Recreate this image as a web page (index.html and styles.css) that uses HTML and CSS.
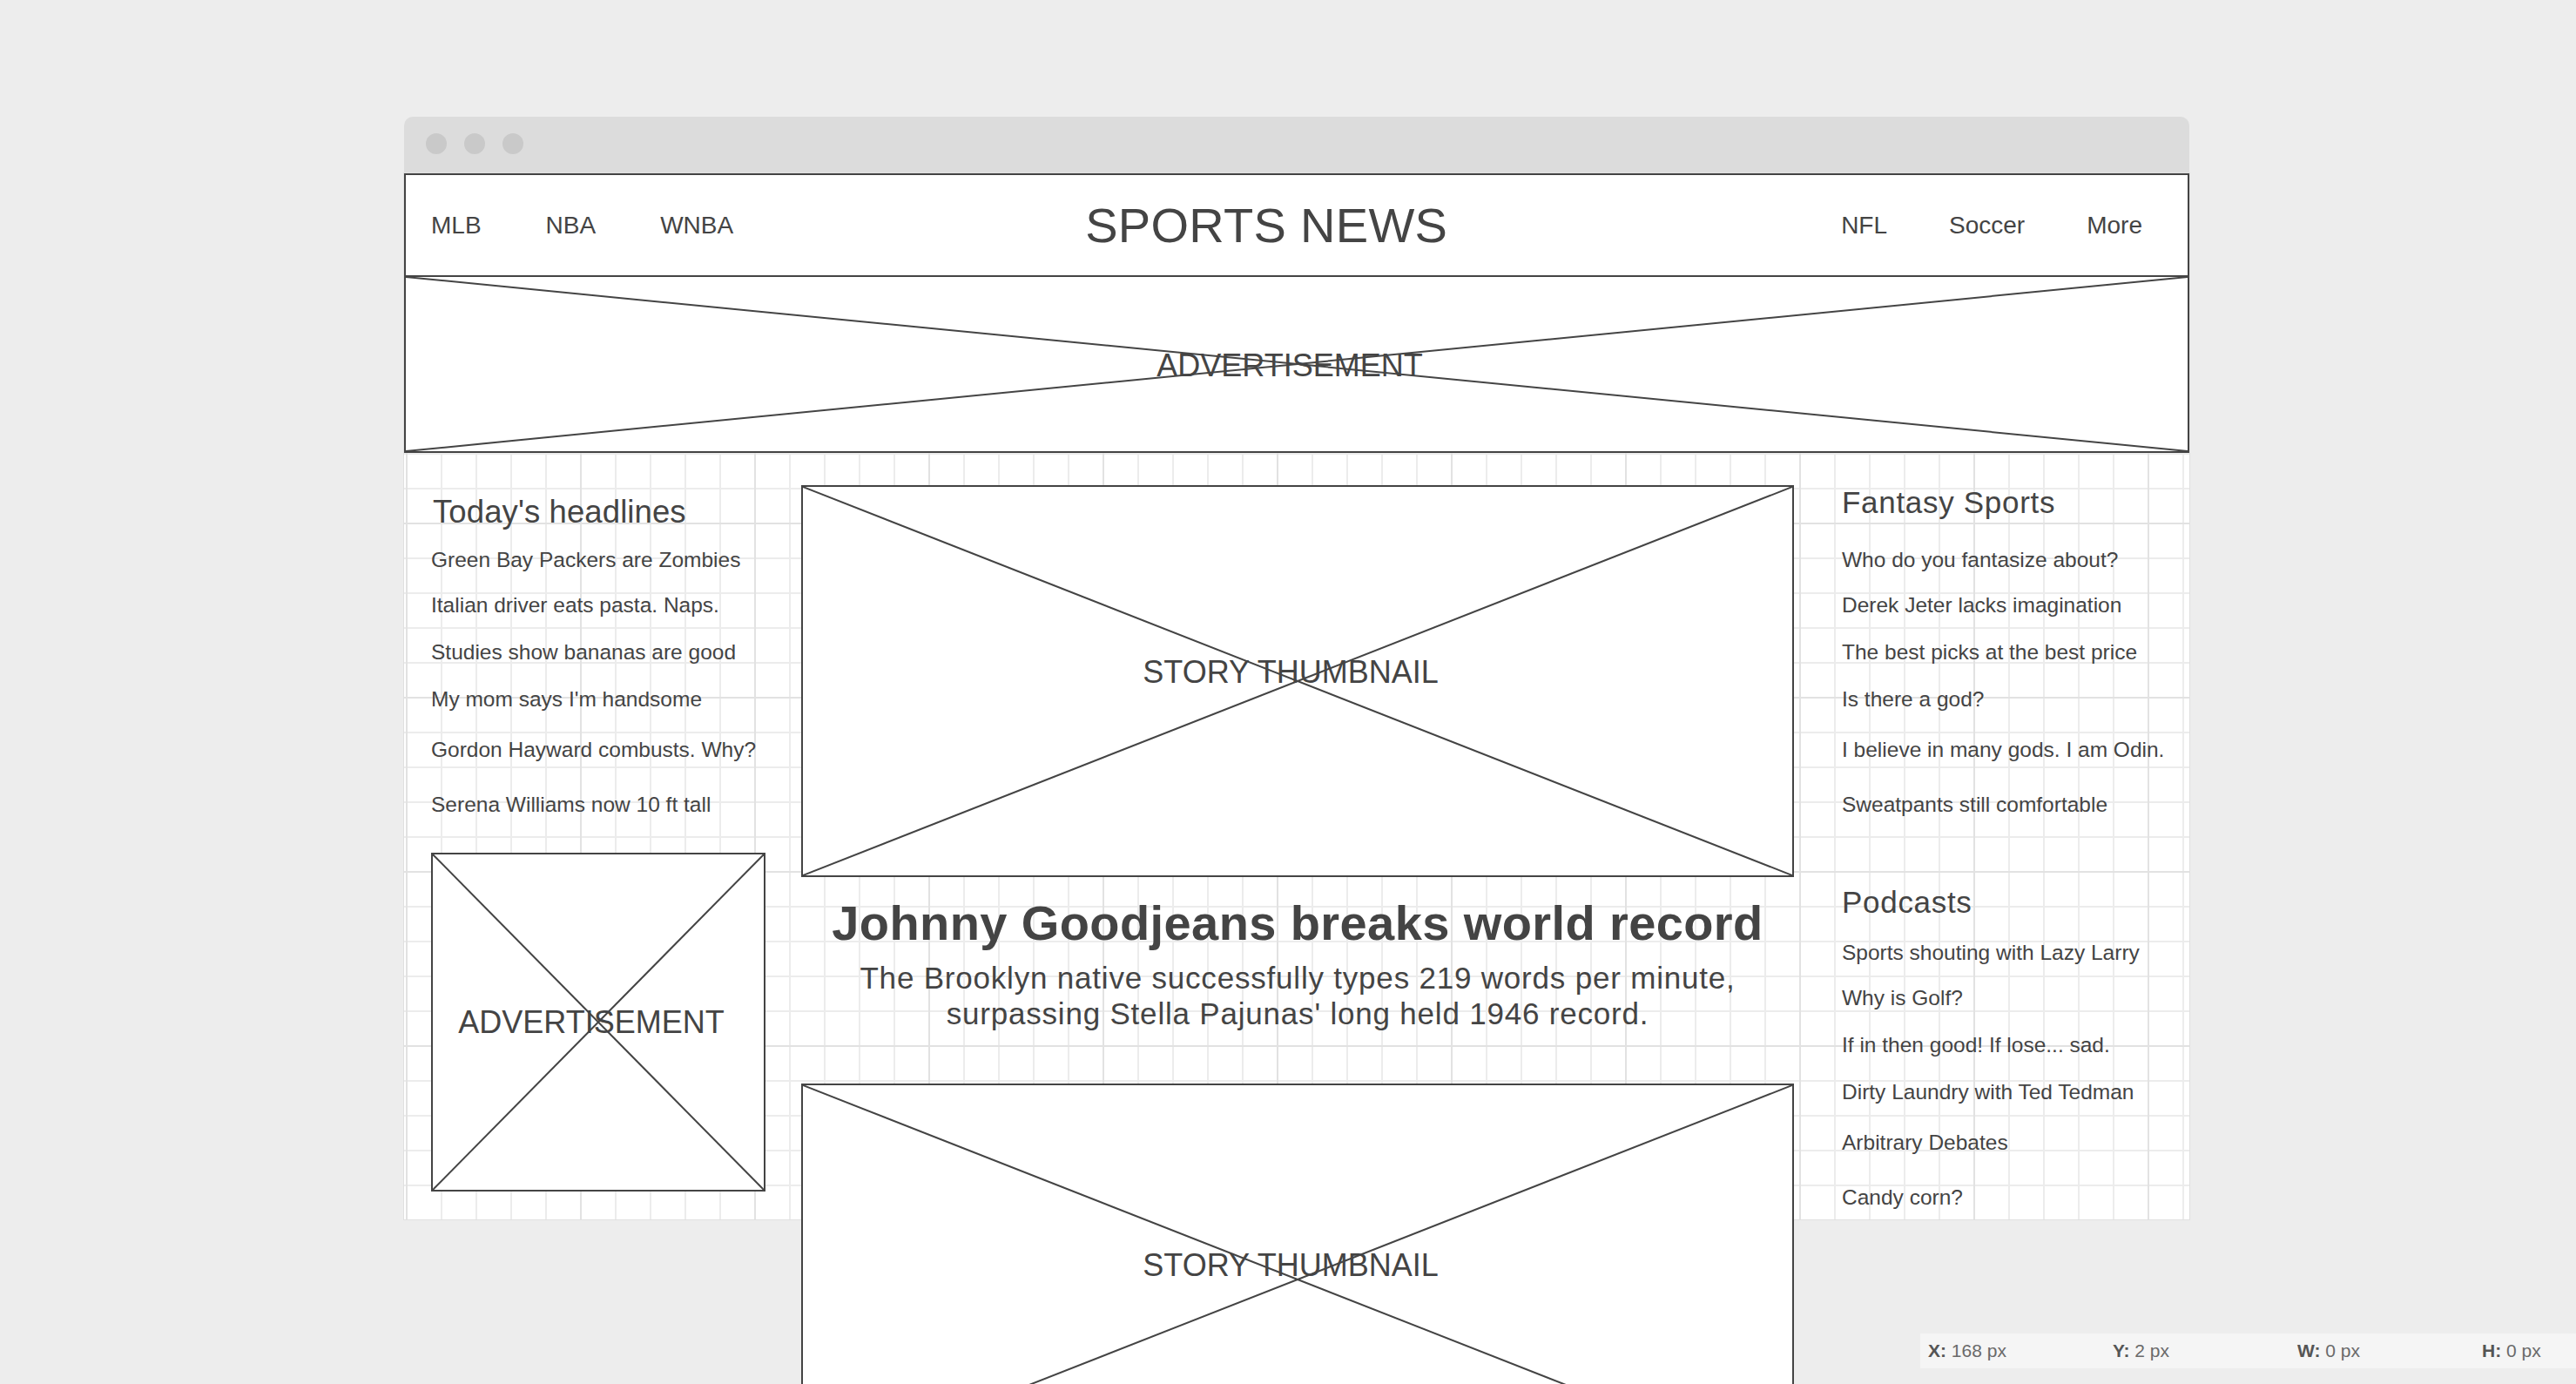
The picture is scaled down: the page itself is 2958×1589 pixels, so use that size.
FILE: index.html
```html
<!DOCTYPE html>
<html lang="en">
<head>
    <meta charset="UTF-8">
    <meta name="viewport" content="width=device-width, initial-scale=1.0">
    <title>Sports News</title>
    <link rel="stylesheet" href="styles.css">
</head>
<body>

    <div class="window">
        <div class="titlebar">
            <span class="dot"></span>
            <span class="dot"></span>
            <span class="dot"></span>
        </div>

        <div class="canvas">
            <header class="topbar">
                <nav class="nav">
                    <a href="#">MLB</a>
                    <a href="#">NBA</a>
                    <a href="#">WNBA</a>
                </nav>
                <div class="brand">SPORTS NEWS</div>
                <nav class="nav nav-right">
                    <a href="#">NFL</a>
                    <a href="#">Soccer</a>
                    <a href="#">More</a>
                </nav>
            </header>

            <div class="box banner">
                <svg class="cross" viewBox="0 0 100 100" preserveAspectRatio="none">
                    <line x1="0" y1="0" x2="100" y2="100"/>
                    <line x1="100" y1="0" x2="0" y2="100"/>
                </svg>
                <span class="box-label">ADVERTISEMENT</span>
            </div>

            <div class="columns">
                <aside class="side side-left">
                    <h2>Today's headlines</h2>
                    <ul class="links">
                        <li>Green Bay Packers are Zombies</li>
                        <li>Italian driver eats pasta. Naps.</li>
                        <li>Studies show bananas are good</li>
                        <li>My mom says I'm handsome</li>
                        <li>Gordon Hayward combusts. Why?</li>
                        <li>Serena Williams now 10 ft tall</li>
                    </ul>

                    <div class="box ad-box">
                        <svg class="cross" viewBox="0 0 100 100" preserveAspectRatio="none">
                            <line x1="0" y1="0" x2="100" y2="100"/>
                            <line x1="100" y1="0" x2="0" y2="100"/>
                        </svg>
                        <span class="box-label">ADVERTISEMENT</span>
                    </div>
                </aside>

                <section class="stories">
                    <div class="box thumb">
                        <svg class="cross" viewBox="0 0 100 100" preserveAspectRatio="none">
                            <line x1="0" y1="0" x2="100" y2="100"/>
                            <line x1="100" y1="0" x2="0" y2="100"/>
                        </svg>
                        <span class="box-label">STORY THUMBNAIL</span>
                    </div>

                    <h1 class="story-title">Johnny Goodjeans breaks world record</h1>
                    <p class="story-sub">The Brooklyn native successfully types 219 words per minute,<br>surpassing Stella Pajunas' long held 1946 record.</p>

                    <div class="box thumb thumb-next">
                        <svg class="cross" viewBox="0 0 100 100" preserveAspectRatio="none">
                            <line x1="0" y1="0" x2="100" y2="100"/>
                            <line x1="100" y1="0" x2="0" y2="100"/>
                        </svg>
                        <span class="box-label">STORY THUMBNAIL</span>
                    </div>
                </section>

                <aside class="side side-right">
                    <h2>Fantasy Sports</h2>
                    <ul class="links">
                        <li>Who do you fantasize about?</li>
                        <li>Derek Jeter lacks imagination</li>
                        <li>The best picks at the best price</li>
                        <li>Is there a god?</li>
                        <li>I believe in many gods. I am Odin.</li>
                        <li>Sweatpants still comfortable</li>
                    </ul>

                    <h2 class="podcasts">Podcasts</h2>
                    <ul class="links links-tight">
                        <li>Sports shouting with Lazy Larry</li>
                        <li>Why is Golf?</li>
                        <li>If in then good! If lose... sad.</li>
                        <li>Dirty Laundry with Ted Tedman</li>
                        <li>Arbitrary Debates</li>
                        <li>Candy corn?</li>
                    </ul>
                </aside>
            </div>
        </div>
    </div>

    <!-- cursor readout, bottom right -->
    <div class="readout">
        <span><b>X:</b> 168 px</span>
        <span><b>Y:</b> 2 px</span>
        <span><b>W:</b> 0 px</span>
        <span><b>H:</b> 0 px</span>
    </div>

</body>
</html>
```

FILE: styles.css
```css
html, body {
    height: 100%;
}

body {
    margin: 0;
    overflow: hidden;
    background-color: #ededed;
    font-family: "Liberation Sans", Arial, Helvetica, sans-serif;
    color: #444;
}

.window {
    width: 2050px;
    margin: 134px 0 0 464px;
}

.titlebar {
    height: 65px;
    background-color: #dcdcdc;
    border-radius: 10px 10px 0 0;
    display: flex;
    gap: 20px;
    padding: 19px 0 0 25px;
    box-sizing: border-box;
}

.dot {
    width: 24px;
    height: 24px;
    border-radius: 50%;
    background-color: #c9c9c9;
}

/* white drawing area with the 40px grid, darker line every 200px */
.canvas {
    height: 1201px;
    background-color: #fff;
    background-image:
        linear-gradient(to right, #e2e2e2 2px, transparent 2px),
        linear-gradient(to bottom, #e2e2e2 2px, transparent 2px),
        linear-gradient(to right, #ececec 2px, transparent 2px),
        linear-gradient(to bottom, #ececec 2px, transparent 2px);
    background-size: 200px 200px, 200px 200px, 40px 40px, 40px 40px;
    background-position: 2px 1px;
    box-shadow: 0 0 0 1px #e0e0e0;
}

.topbar {
    height: 117px;
    box-sizing: border-box;
    border: 2px solid #444;
    border-bottom: none;
    background-color: #fff;
    display: flex;
    align-items: center;
    padding: 0 52px 0 29px;
}

.nav {
    display: flex;
    gap: 74px;
}

.nav a {
    color: #444;
    text-decoration: none;
    font-size: 28px;
}

.nav-right {
    margin-left: auto;
    gap: 71px;
}

.brand {
    margin-left: 404px;
    font-size: 56px;
    letter-spacing: 0.3px;
}

/* wireframe placeholder: a box with an X through it */
.box {
    position: relative;
    box-sizing: border-box;
    border: 2px solid #444;
    background-color: #fff;
    display: flex;
    align-items: center;
    justify-content: center;
    padding-right: 16px;
}

.cross {
    position: absolute;
    top: 0;
    left: 0;
    width: 100%;
    height: 100%;
}

.cross line {
    stroke: #444;
    stroke-width: 2;
    vector-effect: non-scaling-stroke;
}

.box-label {
    position: relative;
    font-size: 36px;
}

.banner {
    height: 204px;
}

.banner .box-label {
    top: 2px;
}

.columns {
    display: grid;
    grid-template-columns: 456px 1140px 1fr;
}

.side {
    padding-top: 36px;
}

.side h2 {
    margin: 0;
    font-size: 35px;
    line-height: 42px;
    letter-spacing: 0.7px;
    font-weight: normal;
}

.side-left {
    padding-left: 31px;
}

.side-left h2 {
    margin-top: 10px;
    padding-left: 2px;
    font-size: 36.5px;
    line-height: 44px;
    letter-spacing: 0.1px;
}

.side-right {
    padding-left: 55px;
}

.links {
    list-style: none;
    margin: 30px 0 0;
    padding: 0;
    font-size: 24.5px;
    line-height: 30px;
}

.side-left .links {
    margin-top: 18px;
}

.links li {
    margin-top: 24px;
}

.links li:first-child {
    margin-top: 0;
}

.links li:nth-child(2) {
    margin-top: 22px;
}

.links li:nth-child(5) {
    margin-top: 28px;
}

.links li:nth-child(6) {
    margin-top: 33px;
}

.side h2.podcasts {
    margin-top: 76px;
}

.links-tight {
    margin-top: 22px;
}

.ad-box {
    width: 384px;
    height: 389px;
    margin-top: 40px;
}

.stories {
    padding-top: 37px;
    text-align: center;
}

.thumb {
    height: 450px;
    padding-bottom: 20px;
}

.thumb-next {
    margin-top: 60px;
}

.thumb-next .box-label {
    top: -6px;
}

.story-title {
    margin: 21px 0 0;
    font-size: 56px;
    line-height: 64px;
    letter-spacing: 0.4px;
}

.story-sub {
    margin: 10px 0 0;
    font-size: 35px;
    line-height: 41px;
    letter-spacing: 0.8px;
}

.readout {
    position: fixed;
    right: 0;
    bottom: 18px;
    width: 753px;
    height: 40px;
    box-sizing: border-box;
    padding-left: 9px;
    background-color: #f5f5f5;
    display: grid;
    grid-template-columns: repeat(4, 212px);
    align-items: center;
    font-size: 21px;
    color: #6a6a6a;
}

.readout b {
    color: #555;
}
```
